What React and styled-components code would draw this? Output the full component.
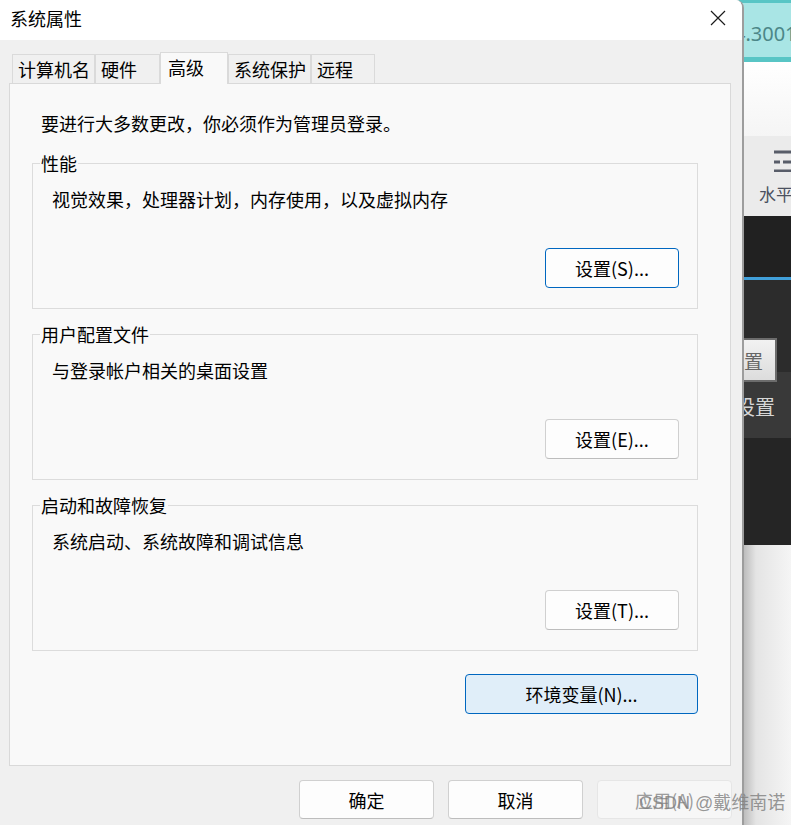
import styled, { createGlobalStyle } from 'styled-components'

const GlobalStyle = createGlobalStyle`
  *, *::before, *::after { box-sizing: border-box; }
  html, body { margin: 0; padding: 0; }
  body {
    width: 791px;
    height: 825px;
    overflow: hidden;
    background: #f2f2f2;
    color: #000;
    font-family: "Noto Sans CJK SC", "Microsoft YaHei", sans-serif;
  }
`

const Desktop = styled.div`
    position: relative;
    display: flex;
    width: 791px;
    height: 825px;
    overflow: hidden;
`

/* ---- dialog ---- */

const Dialog = styled.div`
    position: relative;
    z-index: 1;
    flex: 0 0 744px;
    margin-right: -10px;
    display: flex;
    flex-direction: column;
    background: #f0f0f0;
    border-right: 2px solid #9d9d9d;
    border-top-right-radius: 8px;
    overflow: hidden;
`

const TitleBar = styled.div`
    height: 40px;
    flex: none;
    display: flex;
    align-items: flex-start;
    justify-content: space-between;
    padding: 6px 16px 0 10px;
    background: #fff;
    font-size: 18px;
    line-height: 24px;
`

const CloseIcon = styled.svg`
    margin-top: 4px;
`

const Body = styled.div`
    display: flex;
    flex-direction: column;
    padding: 12px 11px 0 9px;
`

const TabStrip = styled.div`
    position: relative;
    z-index: 1;
    display: flex;
    align-items: flex-end;
    height: 32px;
    margin-bottom: -1px;
    padding-left: 3px;
`

const Tab = styled.div`
    width: ${p => p.$w}px;
    height: ${p => (p.$active ? 32 : 29)}px;
    margin-bottom: ${p => (p.$active ? 0 : 1)}px;
    padding-left: ${p => (p.$active ? 7 : 5)}px;
    border: 1px solid #dadada;
    border-bottom: none;
    background: ${p => (p.$active ? '#f9f9f9' : '#f0f0f0')};
    font-size: 18px;
    line-height: ${p => (p.$active ? 29 : 28)}px;
    white-space: nowrap;
`

const Panel = styled.div`
    display: flex;
    flex-direction: column;
    padding: 27px 32px 51px 22px;
    border: 1px solid #d9d9d9;
    background: #f9f9f9;
`

const Intro = styled.div`
    padding-left: 9px;
    margin-bottom: 16px;
    font-size: 18px;
    line-height: 24px;
`

const Group = styled.fieldset`
    margin: 0;
    min-width: 0;
    padding: 12px 18px 20px 19px;
    border: 1px solid #dcdcdc;
    & + & { margin-top: 13px; }
`

const Legend = styled.legend`
    margin-left: -12px;
    padding: 0 1px;
    font-size: 18px;
    line-height: 24px;
`

const GroupText = styled.div`
    font-size: 18px;
    line-height: 24px;
`

const ButtonRow = styled.div`
    display: flex;
    justify-content: flex-end;
    margin-top: ${p => p.$gap}px;
`

const Button = styled.button`
    width: ${p => p.$w}px;
    height: ${p => p.$h || 40}px;
    padding: 0;
    border: 1px solid ${p => (p.$primary ? '#0067c0' : '#d0d0d0')};
    border-bottom-color: ${p => (p.$primary ? '#0067c0' : p.$disabled ? '#e6e6e6' : '#bdbdbd')};
    border-color: ${p => (p.$disabled ? '#e6e6e6' : undefined)};
    border-radius: 4px;
    background: ${p => (p.$tint ? '#e0eef9' : p.$disabled ? '#f7f7f7' : '#fdfdfd')};
    color: ${p => (p.$disabled ? '#9d9d9d' : '#000')};
    font-family: inherit;
    font-size: 18px;
    line-height: 24px;
`

const Footer = styled.div`
    display: flex;
    justify-content: flex-end;
    gap: 14px;
    padding-top: 14px;
    margin-right: -1px;
`

/* ---- app behind the dialog ---- */

const Behind = styled.div`
    flex: 1;
    display: flex;
    flex-direction: column;
    min-width: 0;
    overflow: hidden;
`

const TealBar = styled.div`
    flex: none;
    height: 62px;
    padding: 3px 0 5px;
    background: #58c5c5;
`

const TealInner = styled.div`
    height: 54px;
    padding-top: 6px;
    background: #a9e5e5;
    color: #4c8788;
    font-family: "Noto Sans", sans-serif;
    font-size: 20px;
    line-height: 50px;
    white-space: nowrap;
`

const WhiteBand = styled.div`
    flex: none;
    height: 74px;
    background: linear-gradient(#ffffff, #f5f5f5);
`

const ToolBand = styled.div`
    flex: none;
    height: 80px;
    display: flex;
    flex-direction: column;
    padding-top: 14px;
    background: #ebebeb;
`

const ToolIcon = styled.svg`
    margin-left: 40px;
`

const ToolLabel = styled.div`
    margin: 10px 0 0 25px;
    color: #4b5160;
    font-size: 17px;
    line-height: 24px;
    white-space: nowrap;
`

const Dark = styled.div`
    flex: none;
    height: ${p => p.$h}px;
    background: ${p => p.$bg};
`

const MidBand = styled.div`
    flex: none;
    height: 158px;
    display: flex;
    flex-direction: column;
    background: linear-gradient(#2c2c2c 0, #2c2c2c 92px, #393939 92px, #393939 100%);
`

const GhostButton = styled.div`
    width: 43px;
    height: 44px;
    margin-top: 58px;
    display: flex;
    justify-content: flex-end;
    align-items: center;
    padding-right: 12px;
    overflow: hidden;
    border: 2px solid #6c6c6c;
    border-left: none;
    background: linear-gradient(#f2f2f2, #dcdcdc);
    color: #666;
    font-size: 19px;
    white-space: nowrap;
`

const GhostLabel = styled.div`
    margin: 13px 0 0 1px;
    color: #d6d6d6;
    font-size: 20px;
    line-height: 24px;
    white-space: nowrap;
`

const LightBottom = styled.div`
    flex: 1;
    background: linear-gradient(to right, #bdbdbd 10px, #e4e4e4 22px, #f5f5f5 100%);
`

const Watermark = styled.div`
    position: absolute;
    z-index: 2;
    left: 639px;
    top: 791px;
    color: rgba(125, 125, 125, 0.8);
    font-family: "Liberation Sans", "Noto Sans CJK SC", sans-serif;
    font-size: 18px;
    line-height: 24px;
    white-space: nowrap;
    pointer-events: none;
`

const tabs = [
    { label: '计算机名', w: 83 },
    { label: '硬件', w: 65 },
    { label: '高级', w: 68, active: true },
    { label: '系统保护', w: 83 },
    { label: '远程', w: 64 },
]

const groups = [
    { title: '性能', text: '视觉效果，处理器计划，内存使用，以及虚拟内存', button: '设置(S)...', primary: true },
    { title: '用户配置文件', text: '与登录帐户相关的桌面设置', button: '设置(E)...' },
    { title: '启动和故障恢复', text: '系统启动、系统故障和调试信息', button: '设置(T)...' },
]

export default function App() {
    return (
        <Desktop>
            <GlobalStyle />
            <Dialog>
                <TitleBar>
                    <span>系统属性</span>
                    <CloseIcon width="16" height="16" viewBox="0 0 16 16">
                        <path d="M1 1L15 15M15 1L1 15" stroke="#1b1b1b" strokeWidth="1.2" fill="none" />
                    </CloseIcon>
                </TitleBar>
                <Body>
                    <TabStrip>
                        {tabs.map(t => (
                            <Tab key={t.label} $w={t.w} $active={t.active}>{t.label}</Tab>
                        ))}
                    </TabStrip>
                    <Panel>
                        <Intro>要进行大多数更改，你必须作为管理员登录。</Intro>
                        {groups.map(g => (
                            <Group key={g.title}>
                                <Legend>{g.title}</Legend>
                                <GroupText>{g.text}</GroupText>
                                <ButtonRow $gap={37}>
                                    <Button $w={134} $primary={g.primary}>{g.button}</Button>
                                </ButtonRow>
                            </Group>
                        ))}
                        <ButtonRow $gap={23}>
                            <Button $w={233} $primary $tint>环境变量(N)...</Button>
                        </ButtonRow>
                    </Panel>
                    <Footer>
                        <Button $w={135} $h={39}>确定</Button>
                        <Button $w={135} $h={39}>取消</Button>
                        <Button $w={135} $h={39} $disabled>应用(A)</Button>
                    </Footer>
                </Body>
            </Dialog>

            <Behind>
                <TealBar>
                    <TealInner>4.3001</TealInner>
                </TealBar>
                <WhiteBand />
                <ToolBand>
                    <ToolIcon width="24" height="22" viewBox="0 0 24 22">
                        <path d="M0 2H24M0 12H6M9 12H24M0 21H24" stroke="#585d69" strokeWidth="3" fill="none" />
                    </ToolIcon>
                    <ToolLabel>水平</ToolLabel>
                </ToolBand>
                <Dark $h={61} $bg="#212121" />
                <Dark $h={3} $bg="#41a0da" />
                <MidBand>
                    <GhostButton>设置</GhostButton>
                    <GhostLabel>设置</GhostLabel>
                </MidBand>
                <Dark $h={107} $bg="#252525" />
                <LightBottom />
            </Behind>

            <Watermark>CSDN @戴维南诺</Watermark>
        </Desktop>
    )
}
